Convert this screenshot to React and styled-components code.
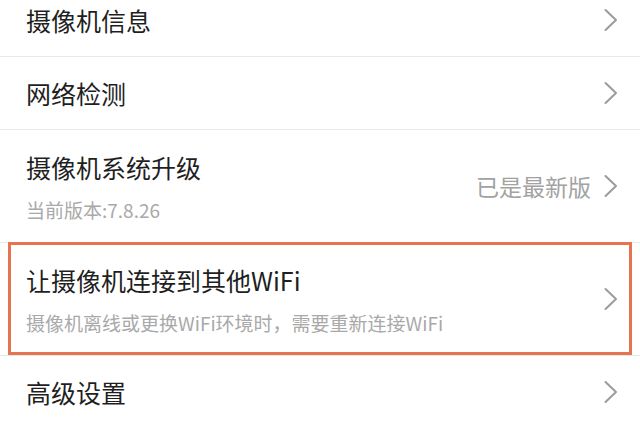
import React from "react";
import styled, { createGlobalStyle } from "styled-components";

const GlobalStyle = createGlobalStyle`
  html, body {
    margin: 0;
    padding: 0;
    background: #ffffff;
    overflow: hidden;
  }
  body {
    font-family: "Noto Sans CJK SC", "Noto Sans", sans-serif;
  }
`;

const List = styled.div`
  margin-top: -16px;
  width: 640px;
`;

const Row = styled.div`
  position: relative;
  box-sizing: border-box;
  display: flex;
  align-items: center;
  height: ${(p) => (p.$tall ? 113 : 73)}px;
  padding: 0 22px 0 26px;
  border-bottom: 1px solid #e9e9e9;
`;

const TextCol = styled.div`
  flex: 1;
  display: flex;
  flex-direction: column;
  gap: 16px;
  padding-top: ${(p) => (p.$tall ? 2 : 0)}px;
`;

const Title = styled.div`
  font-size: 25px;
  line-height: 30px;
  color: #1f1f1f;
`;

const Sub = styled.div`
  font-size: 19px;
  line-height: 24px;
  color: #a9a9a9;
`;

const Value = styled.div`
  font-size: 23px;
  line-height: 30px;
  color: #a2a2a2;
  margin-right: 13px;
`;

const Highlight = styled.div`
  position: absolute;
  top: -1px;
  left: 8px;
  right: 8px;
  bottom: 0;
  border: 3px solid #e5744f;
  pointer-events: none;
`;

const Chevron = () => (
  <svg width="14" height="24" viewBox="0 0 14 24" aria-hidden="true">
    <polyline
      points="1.5,2 12,12 1.5,22"
      fill="none"
      stroke="#9b9b9b"
      strokeWidth="2"
      strokeLinecap="round"
      strokeLinejoin="round"
    />
  </svg>
);

const items = [
  { title: "摄像机信息" },
  { title: "网络检测" },
  { title: "摄像机系统升级", sub: "当前版本:7.8.26", value: "已是最新版" },
  {
    title: "让摄像机连接到其他WiFi",
    sub: "摄像机离线或更换WiFi环境时，需要重新连接WiFi",
    highlight: true,
  },
  { title: "高级设置" },
];

export default function App() {
  return (
    <>
      <GlobalStyle />
      <List>
        {items.map((it) => (
          <Row key={it.title} $tall={!!it.sub}>
            <TextCol $tall={!!it.sub}>
              <Title>{it.title}</Title>
              {it.sub && <Sub>{it.sub}</Sub>}
            </TextCol>
            {it.value && <Value>{it.value}</Value>}
            <Chevron />
            {it.highlight && <Highlight />}
          </Row>
        ))}
      </List>
    </>
  );
}
